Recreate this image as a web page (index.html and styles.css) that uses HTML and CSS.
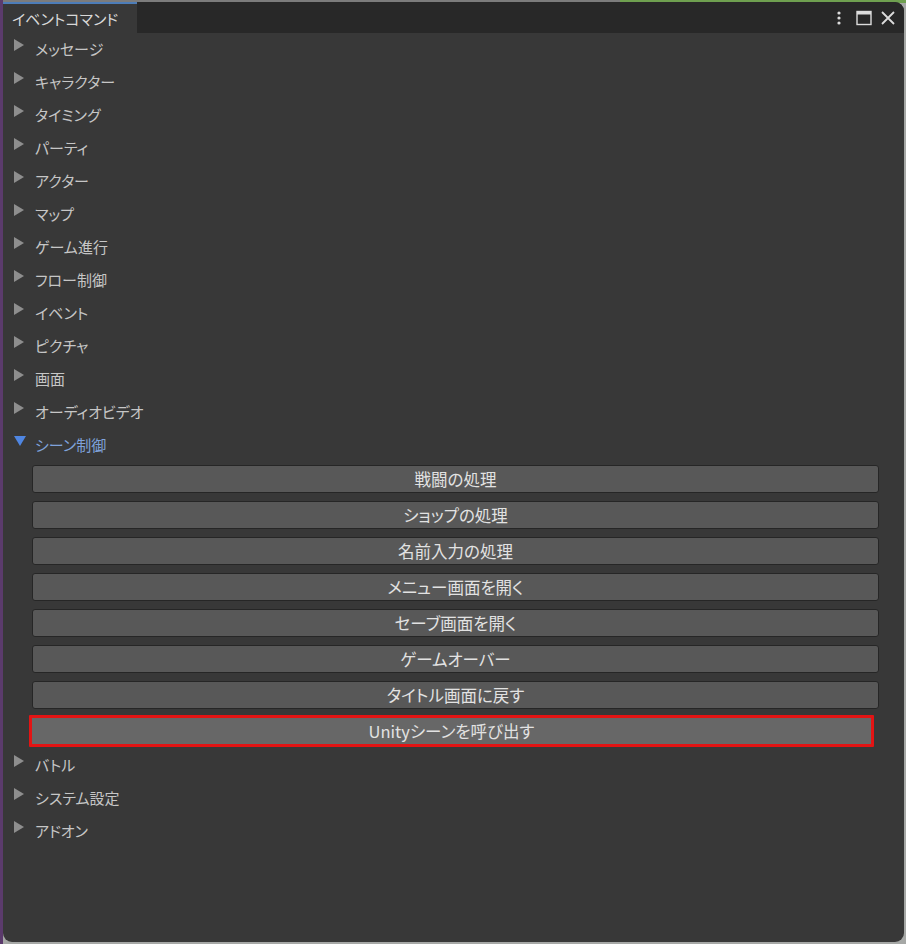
FILE: index.html
```html
<!DOCTYPE html>
<html lang="ja">
<head>
<meta charset="utf-8">
<title>イベントコマンド</title>
<link rel="stylesheet" href="styles.css">
</head>
<body>
<div class="desk">
  <div class="window">
    <div class="tabbar">
      <div class="tab">イベントコマンド</div>
      <div class="tools">
        <svg class="ico" width="6" height="16" viewBox="0 0 6 16"><circle cx="3" cy="3" r="1.6"/><circle cx="3" cy="8" r="1.6"/><circle cx="3" cy="13" r="1.6"/></svg>
        <svg class="ico" width="16" height="16" viewBox="0 0 16 16"><rect x="1" y="1.5" width="14" height="13" fill="none" stroke="#dcdcdc" stroke-width="1.4"/><rect x="1" y="1.5" width="14" height="3" fill="#dcdcdc"/></svg>
        <svg class="ico" width="16" height="16" viewBox="0 0 16 16"><path d="M2 2 L14 14 M14 2 L2 14" stroke="#dcdcdc" stroke-width="1.8" fill="none"/></svg>
      </div>
    </div>
    <div class="content">
      <div class="item"><span class="arrow"></span>メッセージ</div>
      <div class="item"><span class="arrow"></span>キャラクター</div>
      <div class="item"><span class="arrow"></span>タイミング</div>
      <div class="item"><span class="arrow"></span>パーティ</div>
      <div class="item"><span class="arrow"></span>アクター</div>
      <div class="item"><span class="arrow"></span>マップ</div>
      <div class="item"><span class="arrow"></span>ゲーム進行</div>
      <div class="item"><span class="arrow"></span>フロー制御</div>
      <div class="item"><span class="arrow"></span>イベント</div>
      <div class="item"><span class="arrow"></span>ピクチャ</div>
      <div class="item"><span class="arrow"></span>画面</div>
      <div class="item"><span class="arrow"></span>オーディオビデオ</div>
      <div class="item open"><span class="arrow down"></span>シーン制御</div>
      <div class="buttons">
        <div class="btn">戦闘の処理</div>
        <div class="btn">ショップの処理</div>
        <div class="btn">名前入力の処理</div>
        <div class="btn">メニュー画面を開く</div>
        <div class="btn">セーブ画面を開く</div>
        <div class="btn">ゲームオーバー</div>
        <div class="btn">タイトル画面に戻す</div>
        <div class="btn selected">Unityシーンを呼び出す</div>
      </div>
      <div class="item"><span class="arrow"></span>バトル</div>
      <div class="item"><span class="arrow"></span>システム設定</div>
      <div class="item"><span class="arrow"></span>アドオン</div>
    </div>
  </div>
</div>
</body>
</html>
```
FILE: styles.css
```css
html, body {
  margin: 0;
  padding: 0;
  height: 100%;
}
body {
  /* desktop behind the panel: purple strip on the left, green strip on top, grey on the right */
  background:
    linear-gradient(to right, #5b3b6c 0, #5b3b6c 3px, transparent 3px),
    linear-gradient(to bottom, #6fa050 0, #6fa050 3px, transparent 3px) 620px 0 / 100% 100% no-repeat,
    linear-gradient(to bottom, #7c7c7c 0, #7c7c7c 3px, #a6a8a6 3px);
  font-family: "Noto Sans CJK JP", "Noto Sans", sans-serif;
  font-feature-settings: "palt";
}
.desk {
  height: 100%;
  box-sizing: border-box;
  padding: 2px 2px 2px 3px;
}
.window {
  height: 100%;
  background: #383838;
  border-radius: 0 9px 9px 9px;
  overflow: hidden;
  display: flex;
  flex-direction: column;
}
.tabbar {
  height: 31px;
  background: #282828;
  display: flex;
  align-items: stretch;
  flex: none;
}
.tab {
  width: 134px;
  padding-left: 9px;
  background: #383838;
  border-top: 2px solid #4d7db8;
  color: #d8d8d8;
  font-size: 15px;
  line-height: 29px;
  box-sizing: border-box;
}
.tools {
  margin-left: auto;
  display: flex;
  align-items: center;
  gap: 8px;
  padding-right: 8px;
}
.ico {
  fill: #dcdcdc;
  display: block;
}
.tools .ico:first-child {
  margin-right: 6px;
}
.item {
  height: 33px;
  display: flex;
  align-items: center;
  color: #c6c6c6;
  font-size: 15px;
  padding-left: 11px;
  position: relative;
  top: -1px;
}
.arrow {
  width: 0;
  height: 0;
  border-left: 10px solid #8e8e8e;
  border-top: 6px solid transparent;
  border-bottom: 6px solid transparent;
  margin-right: 11px;
  position: relative;
  top: -4px;
}
.arrow.down {
  border-left: 6px solid transparent;
  border-right: 6px solid transparent;
  border-top: 10px solid #4f86e2;
  border-bottom: none;
  margin-right: 9px;
  top: -4px;
}
.item.open {
  color: #7fa2da;
}
.buttons {
  display: flex;
  flex-direction: column;
  gap: 8px;
  padding: 3px 25px 4px 26px;
}
.btn {
  height: 28px;
  background: #585858;
  border: 1px solid #262626;
  border-radius: 3px;
  color: #e2e2e2;
  font-size: 16.5px;
  display: flex;
  align-items: center;
  justify-content: center;
  box-sizing: border-box;
  margin-left: 3px;
}
.btn.selected {
  background: #676767;
  border: 3px solid #e31414;
  border-radius: 1px;
  height: 32px;
  margin: -2px 5px -2px 0;
}
```
